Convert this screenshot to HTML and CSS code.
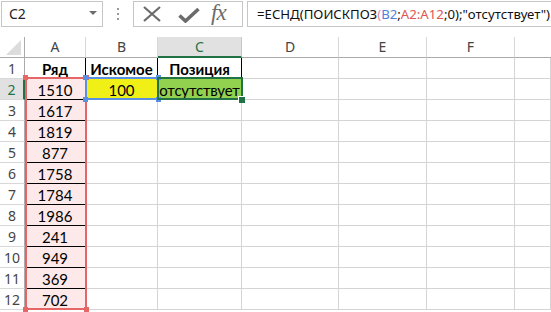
FILE: index.html
```html
<!DOCTYPE html>
<html>

<head>
    <title>ЕСНД ПОИСКПОЗ</title>
    <meta charset="utf-8">
    <link rel="stylesheet" href="styles.css">
</head>

<body>
    <div class="formula-bar">
        <div class="name-box">
            <span>C2</span>
            <svg class="caret" width="8" height="4" viewBox="0 0 8 4"><path d="M0 0H8L4 4Z" fill="#6d6d6d"/></svg>
        </div>
        <div class="grip"><i></i><i></i><i></i></div>
        <div class="fx-buttons">
            <svg class="icon-cancel" width="18" height="16" viewBox="0 0 18 16">
                <path d="M1 1L17 15M17 1L1 15" stroke="#6b6b6b" stroke-width="2.2" fill="none"/>
            </svg>
            <svg class="icon-enter" width="22" height="16" viewBox="0 0 22 16">
                <path d="M1.5 8.5L7.5 14L20.5 2" stroke="#6b6b6b" stroke-width="3.6" fill="none"/>
            </svg>
            <span class="fx">fx</span>
        </div>
        <div class="formula-input">=ЕСНД(ПОИСКПОЗ<span class="paren">(</span><span class="ref-blue">B2</span>;<span class="ref-red">A2:A12</span>;0);"отсутствует")</div>
    </div>

    <div class="sheet">
        <div class="corner"><svg width="15" height="15" viewBox="0 0 15 15"><path d="M15 0V15H0Z" fill="#dcdcdc"/></svg></div>
        <div class="col-head">A</div>
        <div class="col-head">B</div>
        <div class="col-head selected">C</div>
        <div class="col-head">D</div>
        <div class="col-head">E</div>
        <div class="col-head">F</div>
        <div class="col-head last"></div>

        <div class="row-head">1</div>
        <div class="cell title">Ряд</div>
        <div class="cell title">Искомое</div>
        <div class="cell title">Позиция</div>
        <div class="cell"></div><div class="cell"></div><div class="cell"></div><div class="cell"></div>

        <div class="row-head selected">2</div>
        <div class="cell series">1510</div>
        <div class="cell wanted">100</div>
        <div class="cell result">отсутствует</div>
        <div class="cell"></div><div class="cell"></div><div class="cell"></div><div class="cell"></div>

        <div class="row-head">3</div>
        <div class="cell series">1617</div>
        <div class="cell"></div><div class="cell"></div><div class="cell"></div><div class="cell"></div><div class="cell"></div><div class="cell"></div>

        <div class="row-head">4</div>
        <div class="cell series">1819</div>
        <div class="cell"></div><div class="cell"></div><div class="cell"></div><div class="cell"></div><div class="cell"></div><div class="cell"></div>

        <div class="row-head">5</div>
        <div class="cell series">877</div>
        <div class="cell"></div><div class="cell"></div><div class="cell"></div><div class="cell"></div><div class="cell"></div><div class="cell"></div>

        <div class="row-head">6</div>
        <div class="cell series">1758</div>
        <div class="cell"></div><div class="cell"></div><div class="cell"></div><div class="cell"></div><div class="cell"></div><div class="cell"></div>

        <div class="row-head">7</div>
        <div class="cell series">1784</div>
        <div class="cell"></div><div class="cell"></div><div class="cell"></div><div class="cell"></div><div class="cell"></div><div class="cell"></div>

        <div class="row-head">8</div>
        <div class="cell series">1986</div>
        <div class="cell"></div><div class="cell"></div><div class="cell"></div><div class="cell"></div><div class="cell"></div><div class="cell"></div>

        <div class="row-head">9</div>
        <div class="cell series">241</div>
        <div class="cell"></div><div class="cell"></div><div class="cell"></div><div class="cell"></div><div class="cell"></div><div class="cell"></div>

        <div class="row-head">10</div>
        <div class="cell series">949</div>
        <div class="cell"></div><div class="cell"></div><div class="cell"></div><div class="cell"></div><div class="cell"></div><div class="cell"></div>

        <div class="row-head">11</div>
        <div class="cell series">369</div>
        <div class="cell"></div><div class="cell"></div><div class="cell"></div><div class="cell"></div><div class="cell"></div><div class="cell"></div>

        <div class="row-head">12</div>
        <div class="cell series end">702</div>
        <div class="cell"></div><div class="cell"></div><div class="cell"></div><div class="cell"></div><div class="cell"></div><div class="cell"></div>

        <!-- reference highlights drawn over the grid -->
        <div class="range range-red"><i class="tl"></i><i class="tr"></i><i class="bl"></i><i class="br"></i></div>
        <div class="range range-blue"><i class="tl"></i><i class="tr"></i><i class="bl"></i><i class="br"></i></div>
        <div class="selection"><i class="handle"></i></div>
    </div>
</body>

</html>
```

FILE: styles.css
```css
body {
    margin: 0;
    width: 551px;
    height: 312px;
    overflow: hidden;
    background: #fff;
    font-family: 'Lato', 'Liberation Sans', sans-serif;
    color: #000;
}

.formula-bar {
    display: flex;
    align-items: flex-start;
    height: 37px;
    padding: 1px 0 0 1px;
    box-sizing: border-box;
    font-family: 'Noto Sans', 'Liberation Sans', sans-serif;
}

.formula-bar > div {
    flex-shrink: 0;
}

.name-box {
    width: 102px;
    height: 26px;
    box-sizing: border-box;
    border: 1px solid #c6c6c6;
    display: flex;
    align-items: center;
    justify-content: space-between;
    padding: 0 5px 1px 7px;
    font-size: 14px;
    color: #222;
}

.caret {
    margin-top: -1px;
}

.grip {
    width: 30px;
    height: 26px;
    display: flex;
    flex-direction: column;
    align-items: center;
    justify-content: center;
    gap: 3px;
}

.grip i {
    width: 2px;
    height: 2px;
    background: #9a9a9a;
}

.fx-buttons {
    width: 110px;
    height: 26px;
    box-sizing: border-box;
    border: 1px solid #c6c6c6;
    display: flex;
    align-items: center;
    padding-left: 9px;
}

.icon-cancel {
    margin-right: 17px;
}

.icon-enter {
    margin-right: 11px;
    margin-top: 1px;
}

.fx {
    font-family: 'Liberation Serif', serif;
    font-style: italic;
    font-size: 23px;
    color: #6b6b6b;
    margin-top: -3px;
    letter-spacing: -1px;
}

.formula-bar > .formula-input {
    flex: 1 1 0;
    min-width: 0;
    margin-left: 4px;
    height: 26px;
    box-sizing: border-box;
    border: 1px solid #c6c6c6;
    border-right: none;
    padding: 3px 0 0 9px;
    font-size: 13.2px;
    white-space: nowrap;
    overflow: hidden;
    color: #111;
}

.paren {
    color: #e58aa0;
}

.ref-blue {
    color: #4f81d8;
}

.ref-red {
    color: #e05555;
}

/* sheet grid */

.sheet {
    position: relative;
    display: grid;
    grid-template-columns: 25px 61px 72px 84px 97px 88px 88px 1fr;
    grid-template-rows: repeat(13, 21px);
}

.corner,
.col-head,
.row-head,
.cell {
    box-sizing: border-box;
}

.corner {
    border-right: 1px solid #ababab;
    border-bottom: 1px solid #ababab;
    display: flex;
    align-items: flex-end;
    justify-content: flex-end;
    padding: 0 3px 2px 0;
}

.col-head {
    border-right: 1px solid #d8d8d8;
    border-bottom: 1px solid #ababab;
    text-align: center;
    font-family: 'Noto Sans', 'Liberation Sans', sans-serif;
    font-size: 14px;
    line-height: 20px;
    color: #444;
}

.col-head.selected {
    background: #e1e1e1;
    color: #217346;
    border-bottom: 2px solid #217346;
    border-right-color: #c6c6c6;
}

.col-head.last {
    border-right: none;
}

.row-head {
    border-right: 1px solid #ababab;
    border-bottom: 1px solid #d8d8d8;
    text-align: center;
    font-family: 'Noto Sans', 'Liberation Sans', sans-serif;
    font-size: 14px;
    line-height: 21px;
    color: #444;
}

.row-head.selected {
    background: #e1e1e1;
    color: #217346;
    border-right: 2px solid #217346;
}

.cell {
    border-right: 1px solid #d4d4d4;
    border-bottom: 1px solid #d4d4d4;
    text-align: center;
    font-size: 15px;
    line-height: 22px;
    overflow: hidden;
    white-space: nowrap;
}

.cell.title {
    font-weight: bold;
    border-right-color: #000;
    border-bottom-color: #000;
}

.cell.series {
    background: #fde9e9;
    border-right-color: #000;
    border-bottom-color: #000;
}

.cell.wanted {
    background: #f0f016;
}

.cell.result {
    background: #92d050;
    letter-spacing: -0.2px;
}

/* reference highlights */

.range {
    position: absolute;
    box-sizing: border-box;
    border: 2px solid;
}

.range i {
    position: absolute;
    width: 5px;
    height: 5px;
}

.range-red {
    left: 25px;
    top: 40px;
    width: 62px;
    height: 233px;
    border-color: #e46666;
}

.range-red i {
    background: #e46666;
}

.range-blue {
    left: 85px;
    top: 40px;
    width: 74px;
    height: 23px;
    border-color: #5b8fe2;
}

.range-blue i {
    background: #5b8fe2;
}

.range .tl { left: -4px; top: -4px; }
.range .tr { right: -4px; top: -4px; }
.range .bl { left: -4px; bottom: -4px; }
.range .br { right: -4px; bottom: -4px; }

.selection {
    position: absolute;
    left: 157px;
    top: 40px;
    width: 86px;
    height: 23px;
    box-sizing: border-box;
    border: 2px solid #217346;
}

.selection .handle {
    position: absolute;
    right: -4px;
    bottom: -5px;
    width: 6px;
    height: 6px;
    background: #217346;
    border: 1px solid #fff;
    border-right: none;
    border-bottom: none;
}
```
